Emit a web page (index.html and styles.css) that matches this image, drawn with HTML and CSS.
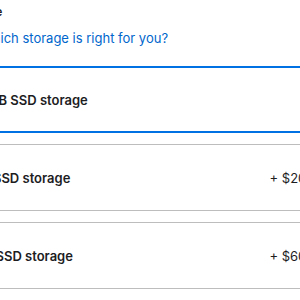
FILE: index.html
```html
<!DOCTYPE html>
<html lang="en">
<head>
<meta charset="UTF-8">
<title>Storage</title>
<link rel="stylesheet" href="styles.css">
</head>
<body>
  <!-- storage picker -->
  <main class="config">
    <h2 class="config-title">Storage</h2>
    <a href="#" class="config-help">Which storage is right for you?</a>

    <div class="options">
      <label class="option is-selected">
        <span class="option-name">512GB SSD storage</span>
      </label>
      <label class="option">
        <span class="option-name">1TB SSD storage</span>
        <span class="option-price">+ $200.00</span>
      </label>
      <label class="option">
        <span class="option-name">2TB SSD storage</span>
        <span class="option-price">+ $600.00</span>
      </label>
    </div>
  </main>
</body>
</html>
```

FILE: styles.css
```css
/* page */
body{
  margin:0;
  font-family: Inter, "Liberation Sans", sans-serif;
  color:#1d1d1f;
  background:#fff;
  overflow:hidden;
}

/* the column is wider than the window, so it is cut on both sides */
.config{
  margin-left:-50px;
  width:399px;
  padding-top:4px;
}

.config-title{
  margin:0;
  padding-left:7px;
  font-size:12px;
  line-height:16px;
  font-weight:600;
}

.config-help{
  display:block;
  margin-top:8px;
  padding-left:30px;
  font-size:13px;
  line-height:20px;
  color:#0066cc;
  text-decoration:none;
}

/* option boxes */
.options{
  margin-top:18px;
  display:flex;
  flex-direction:column;
  gap:11px;
}
.option{
  box-sizing:border-box;
  height:67px;
  display:flex;
  align-items:center;
  justify-content:space-between;
  padding:0 14px 0 16px;
  border:1px solid #bdbdbd;
  border-radius:12px;
  font-size:13px;
}
.option.is-selected{
  border:2px solid #0071e3;
  padding-left:15px;
}
.option-name{ font-weight:600 }
.option-price{ font-weight:400 }
```
